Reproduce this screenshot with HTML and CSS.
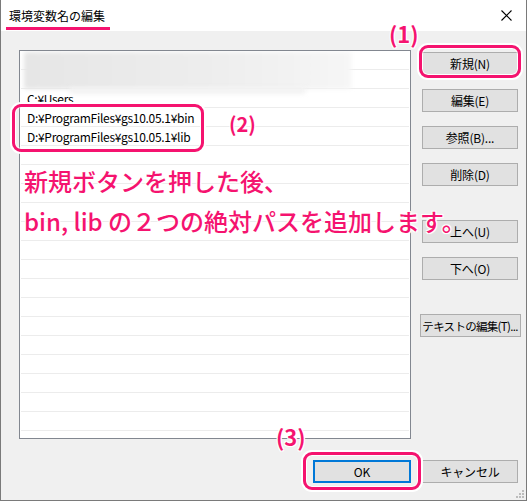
FILE: index.html
```html
<!DOCTYPE html>
<html lang="ja">
<head>
  <meta charset="UTF-8">
  <title>環境変数名の編集</title>
  <link rel="stylesheet" href="styles.css">
</head>
<body>
  <div class="window">
    <div class="titlebar">
      <span class="title">環境変数名の編集</span>
      <svg class="close" width="11" height="11" viewBox="0 0 11 11">
        <path d="M0.5 0.5 L10.5 10.5 M10.5 0.5 L0.5 10.5" stroke="#000" stroke-width="1.1" fill="none"/>
      </svg>
    </div>

    <div class="body">
      <div class="main">
        <div class="list">
          <div class="row"></div>
          <div class="row"></div>
          <div class="row">C:¥Users</div>
          <div class="row">D:¥ProgramFiles¥gs10.05.1¥bin</div>
          <div class="row">D:¥ProgramFiles¥gs10.05.1¥lib</div>
          <div class="row"></div>
          <div class="row"></div>
          <div class="row"></div>
          <div class="row"></div>
          <div class="row"></div>
          <div class="row"></div>
          <div class="row"></div>
          <div class="row"></div>
          <div class="row"></div>
          <div class="row"></div>
          <div class="row"></div>
          <div class="row"></div>
          <div class="row"></div>
          <div class="row"></div>
          <div class="row"></div>
          <div class="blur blur-top"></div>
          <div class="blur blur-mid"></div>
        </div>

        <div class="side">
          <button class="btn first">新規(N)</button>
          <button class="btn">編集(E)</button>
          <button class="btn">参照(B)...</button>
          <button class="btn">削除(D)</button>
          <button class="btn group">上へ(U)</button>
          <button class="btn">下へ(O)</button>
          <button class="btn group wide">テキストの編集(T)...</button>
        </div>
      </div>

      <div class="footer">
        <button class="btn ok">OK</button>
        <button class="btn">キャンセル</button>
      </div>
    </div>

    <!-- annotations -->
    <div class="underline"></div>
    <div class="mark mark-1"></div>
    <div class="mark mark-2"></div>
    <div class="mark mark-3"></div>
    <span class="label label-1">(1)</span>
    <span class="label label-2">(2)</span>
    <span class="label label-3">(3)</span>
    <div class="note">
      <p>新規ボタンを押した後、</p>
      <p>bin, lib の２つの絶対パスを追加します。</p>
    </div>

    <svg class="grip" width="8" height="8" viewBox="0 0 8 8">
      <rect x="6" y="0" width="2" height="2" fill="#bcbcbc"/>
      <rect x="3" y="3" width="2" height="2" fill="#bcbcbc"/>
      <rect x="6" y="3" width="2" height="2" fill="#bcbcbc"/>
      <rect x="0" y="6" width="2" height="2" fill="#bcbcbc"/>
      <rect x="3" y="6" width="2" height="2" fill="#bcbcbc"/>
      <rect x="6" y="6" width="2" height="2" fill="#bcbcbc"/>
    </svg>
  </div>
</body>
</html>
```

FILE: styles.css
```css
body {
  margin: 0;
  font-family: "Noto Sans CJK JP", "Noto Sans", sans-serif;
  color: #000;
}
.window {
  position: relative;
  width: 527px;
  height: 501px;
  box-sizing: border-box;
  border-left: 1px solid #7a7a7a;
  border-right: 1px solid #7a7a7a;
  border-bottom: 1px solid #7a7a7a;
  background: #f0f0f0;
  display: flex;
  flex-direction: column;
  overflow: hidden;
}
.titlebar {
  height: 31px;
  background: #fff;
  display: flex;
  align-items: center;
  justify-content: space-between;
  padding: 0 14px 0 8px;
  flex-shrink: 0;
}
.title {
  font-size: 12px;
  line-height: 16px;
}
.body {
  flex: 1;
  padding: 19px 8px 0 18px;
}
.main {
  display: flex;
}
.list {
  position: relative;
  width: 392px;
  height: 389px;
  box-sizing: border-box;
  border: 1px solid #828790;
  background: #fff;
  padding: 0 1px;
  overflow: hidden;
}
.row {
  height: 19px;
  box-sizing: border-box;
  border-bottom: 1px solid #ececec;
  padding-left: 6px;
  font-size: 12px;
  letter-spacing: -0.3px;
  line-height: 19px;
  white-space: nowrap;
}
.blur {
  position: absolute;
  background: linear-gradient(90deg, #e6e6e6, #eeeeee 60%, #f6f6f6);
  filter: blur(2px);
}
.blur-top {
  left: 4px;
  top: 1px;
  width: 327px;
  height: 37px;
}
.blur-mid {
  left: 50px;
  top: 36px;
  width: 235px;
  height: 7px;
  background: #f2f2f2;
}
.side {
  margin-left: 11px;
  width: 96px;
  display: flex;
  flex-direction: column;
  align-items: center;
}
.btn {
  width: 96px;
  height: 23px;
  box-sizing: border-box;
  background: #e1e1e1;
  border: 1px solid #adadad;
  font-family: "Noto Sans CJK JP", "Noto Sans", sans-serif;
  font-size: 12px;
  letter-spacing: -0.2px;
  white-space: nowrap;
  color: #000;
  padding: 0;
  margin-top: 14px;
  flex-shrink: 0;
}
.btn.first {
  margin-top: 2px;
}
.btn.group {
  margin-top: 34px;
}
.btn.wide {
  width: 101px;
  font-size: 11.5px;
  letter-spacing: -0.7px;
}
.footer {
  display: flex;
  justify-content: flex-end;
  gap: 11px;
  margin-top: 21px;
}
.footer .btn {
  margin-top: 0;
}
.btn.ok {
  width: 98px;
  border: 2px solid #0078d7;
}

/* annotations */
.underline {
  position: absolute;
  left: 5px;
  top: 27px;
  width: 104px;
  height: 3px;
  background: #f5136f;
}
.mark {
  position: absolute;
  box-sizing: border-box;
  border: 3px solid #f5136f;
  border-radius: 9px;
  box-shadow: 0 0 0 2px #fff, inset 0 0 0 1px #fff;
}
.mark-1 { left: 418px; top: 45px; width: 102px; height: 33px; }
.mark-2 { left: 11px; top: 104px; width: 192px; height: 48px; }
.mark-3 { left: 302px; top: 452px; width: 118px; height: 38px; }
.label {
  position: absolute;
  color: #f5136f;
  font-size: 22px;
  font-weight: bold;
  line-height: 26px;
  text-shadow: 0 0 2px #fff, 1px 1px 0 #fff, -1px -1px 0 #fff, 1px -1px 0 #fff, -1px 1px 0 #fff;
}
.label-1 { left: 388px; top: 20px; }
.label-2 { left: 228px; top: 111px; font-size: 20px; }
.label-3 { left: 275px; top: 423px; }
.note {
  position: absolute;
  left: 23px;
  top: 161px;
  color: #f5136f;
  font-size: 24px;
  font-weight: 500;
  text-shadow: 1px 1px 0 #fff, -1px -1px 0 #fff, 1px -1px 0 #fff, -1px 1px 0 #fff, 0 0 3px #fff;
}
.note p {
  margin: 0;
  line-height: 40px;
  white-space: nowrap;
}
.grip {
  position: absolute;
  right: 2px;
  bottom: 2px;
}
```
